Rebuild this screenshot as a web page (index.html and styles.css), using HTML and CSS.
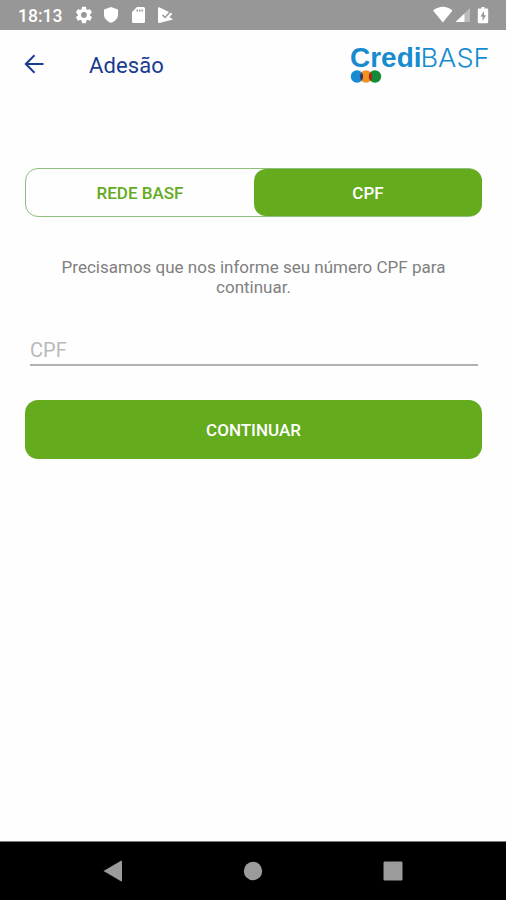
FILE: index.html
```html
<!DOCTYPE html>
<html lang="pt-BR">
<head>
  <meta charset="UTF-8">
  <meta name="viewport" content="width=device-width, initial-scale=1.0">
  <title>Adesão</title>
  <link rel="stylesheet" href="styles.css">
</head>
<body>
  <div class="status-bar">
    <span class="clock">18:13</span>
    <svg class="status-left" width="98" height="18" viewBox="0 0 98 18" fill="#fff">
      <!-- settings -->
      <g transform="translate(-.9 -.9) scale(.82)"><path d="M19.43 12.98c.04-.32.07-.64.07-.98s-.03-.66-.07-.98l2.11-1.65c.19-.15.24-.42.12-.64l-2-3.46c-.12-.22-.39-.3-.61-.22l-2.49 1c-.52-.4-1.08-.73-1.69-.98l-.38-2.65A.49.49 0 0 0 14 2h-4c-.25 0-.46.18-.49.42l-.38 2.65c-.61.25-1.17.59-1.69.98l-2.49-1c-.23-.09-.49 0-.61.22l-2 3.46c-.13.22-.07.49.12.64l2.11 1.65c-.04.32-.07.65-.07.98s.03.66.07.98l-2.11 1.65c-.19.15-.24.42-.12.64l2 3.46c.12.22.39.3.61.22l2.49-1c.52.4 1.08.73 1.69.98l.38 2.65c.03.24.24.42.49.42h4c.25 0 .46-.18.49-.42l.38-2.65c.61-.25 1.17-.59 1.69-.98l2.49 1c.23.09.49 0 .61-.22l2-3.46c.12-.22.07-.49-.12-.64l-2.11-1.65zM12 15.5A3.5 3.5 0 1 1 12 8.500a3.500 3.500 0 0 1 0 7z"/></g>
      <!-- shield -->
      <path d="M36 1l7 2.600v5.200c0 3.600-2.800 6.700-7 8-4.200-1.300-7-4.400-7-8V3.600z"/>
      <!-- sd card -->
      <path fill-rule="evenodd" d="M62 1h6.500Q70 1 70 2.500v13q0 1.500-1.500 1.500h-10Q57 17 57 15.500V6zM61.500 3.500v2H63v-2zM64 3.500v2h1.500v-2zM66.500 3.500v2H68v-2z"/>
      <!-- play -->
      <path d="M84.300 1.200L97.500 7.800 94.500 11 98 13.500 84.300 17Q83 17 83 16V2Q83 1 84.300 1.200z"/>
      <path d="M87.500 9l2.500 2.500 5-5.500" fill="none" stroke="#979797" stroke-width="1.500"/>
    </svg>
    <svg class="status-right" width="57" height="18" viewBox="0 0 57 18" fill="#fff">
      <path d="M0 4.500Q10-3 19.500 4.500L9.800 16.500z"/>
      <path d="M37 2v14H22.500z" opacity=".35"/>
      <path d="M31.500 7.500V16h-9z"/>
      <path fill-rule="evenodd" d="M48.500 1h3v1.500H54q1.200 0 1.200 1.200V16q0 1.200-1.200 1.200h-8q-1.200 0-1.200-1.200V3.700q0-1.200 1.200-1.200h2.500zM51 5l-3.500 5.500h2V15L53 9.200h-2z"/>
    </svg>
  </div>

  <header class="top-bar">
    <svg class="back" width="20" height="20" viewBox="0 0 20 20" fill="none" stroke="#193c91" stroke-width="2">
      <path d="M19.500 10H2M10.500 1.300L1.800 10l8.700 8.700"/>
    </svg>
    <h1>Adesão</h1>
    <svg class="logo" width="144" height="44" viewBox="0 0 144 44">
      <text class="logo-bold" x="0" y="26" textLength="71.500" lengthAdjust="spacingAndGlyphs">Credi</text>
      <text class="logo-light" x="70.500" y="26" textLength="69" lengthAdjust="spacingAndGlyphs">BASF</text>
      <circle cx="7" cy="35.500" r="6.200" fill="#168bd0"/>
      <circle cx="16" cy="35.500" r="6.200" fill="#f39221"/>
      <circle cx="25" cy="35.500" r="6.200" fill="#138b37"/>
      <path d="M11.500 31.200a6.200 6.200 0 0 1 0 8.600 6.200 6.200 0 0 1 0-8.600z" fill="#3a3672"/>
      <path d="M20.500 31.200a6.200 6.200 0 0 1 0 8.600 6.200 6.200 0 0 1 0-8.600z" fill="#b32119"/>
    </svg>
  </header>

  <main class="content">
    <div class="tabs">
      <button class="tab">REDE BASF</button>
      <button class="tab active">CPF</button>
    </div>
    <p class="message">Precisamos que nos informe seu número CPF para continuar.</p>
    <input class="field" type="text" placeholder="CPF">
    <button class="continue">CONTINUAR</button>
  </main>

  <nav class="nav-bar">
    <svg width="20" height="22" viewBox="0 0 20 22"><path d="M.500 11L18 .800q1-.500 1 .700v19q0 1.200-1 .700z"/></svg>
    <svg width="20" height="22" viewBox="0 0 20 22"><circle cx="10" cy="11" r="9.200"/></svg>
    <svg width="20" height="22" viewBox="0 0 20 22"><rect x=".500" y="1.500" width="19" height="19" rx="1.200"/></svg>
  </nav>
</body>
</html>
```

FILE: styles.css
```css
:root {
  --green: #64ab1e;
  --blue: #193c91;
}

* {
  box-sizing: border-box;
}

body {
  margin: 0;
  height: 900px;
  display: flex;
  flex-direction: column;
  background: #fefefe;
  font-family: Roboto, sans-serif;
  overflow: hidden;
}

.status-bar {
  height: 30px;
  display: flex;
  align-items: center;
  padding: 0 16px 0 18px;
  background: #979797;
  color: #fff;
}

.clock {
  width: 57px;
  font-size: 17.5px;
  font-weight: 500;
  line-height: 30px;
  padding-top: 2px;
}

.status-right {
  margin-left: auto;
}

.top-bar {
  height: 70px;
  display: flex;
  align-items: flex-start;
  padding: 0 12px 0 24px;
}

.back {
  margin-top: 24px;
}

h1 {
  margin: 22px 0 0 45px;
  color: var(--blue);
  font-size: 22px;
  font-weight: 400;
  line-height: 28px;
  letter-spacing: 0.1px;
}

.logo {
  margin: 11px 0 0 auto;
  overflow: visible;
}

.logo-bold {
  font: bold 27px "Liberation Sans", sans-serif;
  fill: #168bd0;
}

.logo-light {
  font: 300 26px Inter, sans-serif;
  fill: #168bd0;
}

.content {
  flex: 1;
  display: flex;
  flex-direction: column;
  padding: 68px 24px 0 25px;
}

button {
  border: none;
  padding: 0;
  font-family: inherit;
  font-size: 17px;
  font-weight: 500;
}

.tabs {
  height: 49px;
  display: flex;
  border: 1px solid #8dc078;
  border-radius: 13px;
}

.tab {
  flex: 1;
  padding-top: 1px;
  background: none;
  color: var(--green);
}

.tab.active {
  margin: 0 -1px 0 0;
  border-radius: 12px;
  background: var(--green);
  color: #fff;
}

.message {
  margin: 40px 30px 0;
  color: #808080;
  font-size: 17px;
  line-height: 20px;
  text-align: center;
}

.field {
  height: 34px;
  margin: 35px 4px 0 5px;
  padding: 3px 0 0;
  border: none;
  border-bottom: 2px solid #b2b2b2;
  background: none;
  font-family: inherit;
  font-size: 20px;
  outline: none;
}

.field::placeholder {
  color: #b9b9b9;
  opacity: 1;
}

.continue {
  height: 59px;
  margin-top: 34px;
  border-radius: 13px;
  background: var(--green);
  color: #fff;
}

.nav-bar {
  height: 59px;
  display: flex;
  justify-content: center;
  align-items: center;
  gap: 120px;
  border-top: 1px solid #777;
  background: #000;
  fill: #9b9b9b;
}
```
